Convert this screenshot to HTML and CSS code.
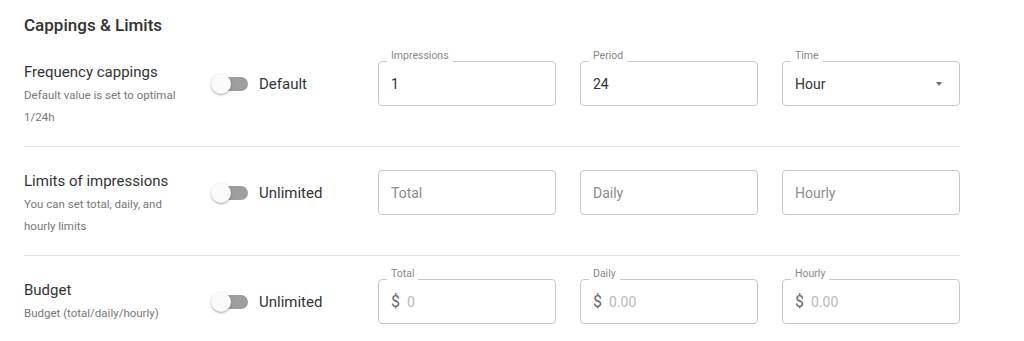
FILE: index.html
```html
<!DOCTYPE html>
<html>
<head>
    <meta charset="utf-8" />
    <title>Cappings &amp; Limits</title>
    <link rel="stylesheet" href="styles.css">
</head>
<body>
    <div class="panel">
        <h3 class="panel-title">Cappings &amp; Limits</h3>

        <div class="row">
            <div class="row-info">
                <div class="row-title">Frequency cappings</div>
                <div class="row-hint">Default value is set to optimal 1/24h</div>
            </div>
            <div class="row-switch">
                <span class="switch"><span class="switch-track"></span><span class="switch-thumb"></span></span>
                <span class="switch-label">Default</span>
            </div>
            <div class="row-fields">
                <div class="field">
                    <label>Impressions</label>
                    <input type="text" value="1" />
                </div>
                <div class="field">
                    <label>Period</label>
                    <input type="text" value="24" />
                </div>
                <div class="field select">
                    <label>Time</label>
                    <span class="select-value">Hour</span>
                    <span class="select-arrow"></span>
                </div>
            </div>
        </div>

        <div class="row">
            <div class="row-info">
                <div class="row-title">Limits of impressions</div>
                <div class="row-hint">You can set total, daily, and hourly limits</div>
            </div>
            <div class="row-switch">
                <span class="switch"><span class="switch-track"></span><span class="switch-thumb"></span></span>
                <span class="switch-label">Unlimited</span>
            </div>
            <div class="row-fields">
                <div class="field">
                    <input type="text" class="dim" placeholder="Total" />
                </div>
                <div class="field">
                    <input type="text" class="dim" placeholder="Daily" />
                </div>
                <div class="field">
                    <input type="text" class="dim" placeholder="Hourly" />
                </div>
            </div>
        </div>

        <div class="row">
            <div class="row-info">
                <div class="row-title">Budget</div>
                <div class="row-hint">Budget (total/daily/hourly)</div>
            </div>
            <div class="row-switch">
                <span class="switch"><span class="switch-track"></span><span class="switch-thumb"></span></span>
                <span class="switch-label">Unlimited</span>
            </div>
            <div class="row-fields">
                <div class="field">
                    <label>Total</label>
                    <span class="currency">$</span>
                    <input type="text" placeholder="0" />
                </div>
                <div class="field">
                    <label>Daily</label>
                    <span class="currency">$</span>
                    <input type="text" placeholder="0.00" />
                </div>
                <div class="field">
                    <label>Hourly</label>
                    <span class="currency">$</span>
                    <input type="text" placeholder="0.00" />
                </div>
            </div>
        </div>
    </div>
</body>
</html>
```

FILE: styles.css
```css
* {
    box-sizing: border-box;
}

html, body {
    margin: 0;
    padding: 0;
}

body {
    background: #fff;
    color: #333;
    font-family: Roboto, "Liberation Sans", Arial, sans-serif;
}

.panel {
    width: 936px;
    margin-left: 24px;
}

.panel-title {
    margin: 15px 0 3px;
    font-family: "Roboto Medium", Roboto, "Liberation Sans", Arial, sans-serif;
    font-size: 17px;
    line-height: 20px;
    font-weight: 500;
    color: #333;
}

.row {
    display: flex;
    align-items: flex-start;
    padding: 23px 0 18px;
}

.row + .row {
    border-top: 1px solid #e4e4e4;
}

.row-info {
    width: 187px;
}

.row-title {
    font-size: 15px;
    line-height: 22px;
    margin-bottom: 1px;
    color: #333;
}

.row-hint {
    max-width: 165px;
    font-size: 11.5px;
    line-height: 22px;
    color: #777;
}

.row-switch {
    width: 167px;
    height: 45px;
    display: flex;
    align-items: center;
    gap: 11px;
}

.switch {
    position: relative;
    width: 37px;
    height: 20px;
    flex: none;
}

.switch-track {
    position: absolute;
    left: 3px;
    top: 3px;
    width: 34px;
    height: 14px;
    border-radius: 7px;
    background: #9e9e9e;
}

.switch-thumb {
    position: absolute;
    left: 0;
    top: 0;
    width: 20px;
    height: 20px;
    border-radius: 50%;
    background: #fafafa;
    box-shadow: 0 1px 3px rgba(0, 0, 0, 0.25), 0 1px 1px rgba(0, 0, 0, 0.12);
}

.switch-label {
    font-size: 15px;
    color: #333;
}

.row-fields {
    display: flex;
    gap: 24px;
}

.field {
    position: relative;
    width: 178px;
    height: 45px;
    display: flex;
    align-items: center;
    padding: 0 12px;
    border: 1px solid #c8c8c8;
    border-radius: 4px;
}

.field label {
    position: absolute;
    top: -12px;
    left: 8px;
    padding: 0 4px;
    background: #fff;
    font-size: 10.5px;
    line-height: 12px;
    color: #888;
}

.field input {
    flex: 1;
    min-width: 0;
    border: none;
    outline: none;
    padding: 0;
    background: transparent;
    font: inherit;
    font-size: 14px;
    color: #333;
}

.field input::placeholder {
    color: #bababa;
}

.field input.dim::placeholder {
    color: #8c8c8c;
}

.currency {
    margin-right: 7px;
    font-size: 16px;
    color: #666;
}

.select-value {
    flex: 1;
    font-size: 14px;
    color: #333;
}

.select-arrow {
    width: 0;
    height: 0;
    margin-right: 5px;
    border-left: 3.5px solid transparent;
    border-right: 3.5px solid transparent;
    border-top: 4px solid #6f6f6f;
}
```
